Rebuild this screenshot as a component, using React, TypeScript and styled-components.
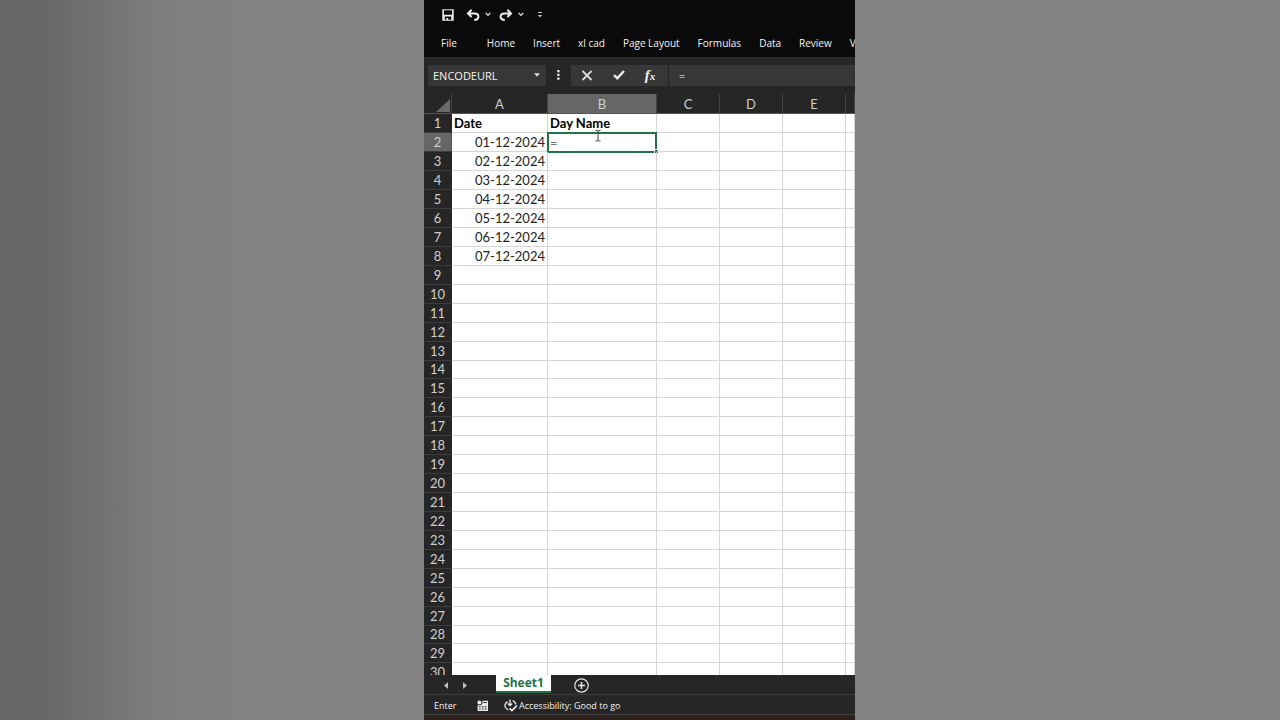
import React from "react";
import styled, { createGlobalStyle } from "styled-components";

const UI_FONT = '"Open Sans", "Noto Sans", sans-serif';
const CELL_FONT = 'Lato, "Open Sans", sans-serif';

const GlobalStyle = createGlobalStyle`
  *, *::before, *::after { box-sizing: border-box; }
  body { margin: 0; background: #828282; overflow: hidden; }
  button, input { font: inherit; color: inherit; border: 0; padding: 0; margin: 0; background: none; border-radius: 0; outline: none; }
  svg { display: block; }
`;

const Stage = styled.main`
  display: grid;
  grid-template-columns: 424fr 431fr 425fr;
  height: 100vh;
  background: linear-gradient(to right, #656565 0%, #696969 4%, #727272 8%, #7b7b7b 11%, #808080 15%, #828282 20%);
`;

const Workbook = styled.section`
  grid-column: 2;
  display: flex;
  flex-direction: column;
  min-width: 0;
  height: 100vh;
  overflow: hidden;
  background: #262626;
  color: #f4f4f4;
  font-family: ${UI_FONT};
  font-size: 10px;
  font-weight: 500;
`;

const QuickAccess = styled.header`
  display: flex;
  align-items: center;
  flex: none;
  height: 29px;
  padding-left: 18px;
  background: #0a0a0a;
`;

const IconButton = styled.button<{ $width: number; $gap?: number }>`
  display: flex;
  align-items: center;
  justify-content: center;
  flex: none;
  width: ${(p) => p.$width}px;
  height: 20px;
  margin-right: ${(p) => p.$gap ?? 0}px;
`;

const Ribbon = styled.nav`
  display: flex;
  flex: none;
  height: 28px;
  padding-left: 8px;
  background: #0a0a0a;
  overflow: hidden;
`;

const RibbonTab = styled.button<{ $wide?: boolean }>`
  flex: none;
  height: 28px;
  padding: 0 9px;
  margin-right: ${(p) => (p.$wide ? 12 : 0)}px;
  line-height: 28px;
  white-space: nowrap;
`;

const FormulaBar = styled.div`
  display: flex;
  align-items: center;
  flex: none;
  height: 37px;
  padding: 0 0 2px 4px;
  border-top: 1px solid #303030;
`;

const NameBox = styled.div`
  display: flex;
  align-items: center;
  flex: none;
  width: 118px;
  height: 21px;
  background: #373737;
`;

const NameInput = styled.input`
  flex: 1;
  min-width: 0;
  height: 21px;
  padding-left: 5px;
  font-size: 11px;
  font-weight: 400;
`;

const FormulaActions = styled.div`
  display: flex;
  flex: none;
  align-items: center;
  width: 98px;
  height: 21px;
  background: #373737;
  border-right: 1px solid #222;
`;

const FunctionGlyph = styled.span`
  font: italic 700 15px/20px "Liberation Serif", serif;

  small {
    font-size: 11px;
  }
`;

const FormulaInput = styled.input`
  flex: 1;
  min-width: 0;
  height: 21px;
  padding-left: 10px;
  background: #373737;
  font-size: 11px;
`;

const SheetArea = styled.div`
  flex: 1;
  min-height: 0;
  overflow: hidden;
  background: #fff;
`;

const SheetTable = styled.table`
  width: 100%;
  table-layout: fixed;
  border-collapse: separate;
  border-spacing: 0;
  font-family: ${CELL_FONT};
  font-size: 13px;
  line-height: 18px;
  color: #222;
`;

const Column = styled.col<{ $width?: number }>`
  width: ${(p) => (p.$width ? `${p.$width}px` : "auto")};
`;

const ColumnHeader = styled.th<{ $active?: boolean }>`
  height: 20px;
  padding: 1px 0 0;
  background: ${(p) => (p.$active ? "#666" : "#262626")};
  border-right: 1px solid #444;
  border-bottom: 1px solid ${(p) => (p.$active ? "#217346" : "#555")};
  color: #cfcfcf;
  font-weight: 400;
  line-height: 18px;
`;

const SheetRow = styled.tr`
  height: 19px;
  &:nth-child(14n) { height: 18px; }
  &:nth-child(14n) > * { line-height: 17px; }
`;

const RowHeader = styled.th<{ $active?: boolean }>`
  padding: 0;
  background: ${(p) => (p.$active ? "#666" : "#262626")};
  border-right: 1px solid ${(p) => (p.$active ? "#217346" : "#262626")};
  border-bottom: 1px solid #3c3c3c;
  color: #cfcfcf;
  font-weight: 400;
`;

const Cell = styled.td<{ $right?: boolean; $bold?: boolean }>`
  position: relative;
  padding: 0 2px;
  border-right: 1px solid #d6d6d6;
  border-bottom: 1px solid #d6d6d6;
  text-align: ${(p) => (p.$right ? "right" : "left")};
  font-weight: ${(p) => (p.$bold ? 700 : 400)};
  color: ${(p) => (p.$bold ? "#000" : "#222")};
  white-space: nowrap;
`;

const CellEditor = styled.input`
  position: absolute;
  inset: -1px;
  width: calc(100% + 2px);
  height: 21px;
  padding: 0 1px;
  border: 2px solid #217346;
  background: #fff;
  color: #777;
`;

const FillHandle = styled.span`
  position: absolute;
  right: -2px;
  bottom: -2px;
  width: 4px;
  height: 4px;
  background: #217346;
  border-left: 1px solid #fff;
  border-top: 1px solid #fff;
`;

const TextCursor = styled.svg`
  position: absolute;
  left: 46px;
  top: -3px;
`;

const SheetBar = styled.div`
  display: flex;
  flex: none;
  height: 20px;
  padding-left: 12px;
  border-bottom: 1px solid #3d3d3d;
`;

const SheetTab = styled.button`
  width: 55px;
  height: 18px;
  margin: 0 20px 0 21px;
  background: #fff;
  border-bottom: 2px solid #217346;
  color: #217346;
  font-size: 12px;
  font-weight: 700;
  line-height: 16px;
`;

const StatusBar = styled.footer`
  display: flex;
  align-items: center;
  flex: none;
  height: 19px;
  padding: 2px 0 0 10px;
  font-size: 9px;
`;

const StatusMode = styled.span`
  width: 42px;
`;

const StatusButton = styled.button`
  display: flex;
  align-items: center;
  gap: 1px;
  height: 17px;
  margin-left: 16px;
  white-space: nowrap;
`;

const BottomEdge = styled.div`
  flex: none;
  height: 6px;
  background: #2c221b;
  border-top: 1px solid #404040;
`;

const Chevron = () => (
  <svg width="6" height="5" viewBox="0 0 6 5" fill="none" stroke="#ddd" strokeWidth="1.3">
    <path d="M.7 1 3 3.4 5.3 1" />
  </svg>
);

const UndoIcon = ({ flip }: { flip?: boolean }) => (
  <svg width="14" height="12" viewBox="0 0 14 12" fill="none" stroke="#eee" strokeWidth="2">
    <g transform={flip ? "matrix(-1 0 0 1 14 0)" : undefined}>
      <path d="M5.6.8 2 4.4 5.6 8M2.2 4.4h6.2c2.6 0 4 1.3 4 3.1 0 2-1.5 3.4-4.2 3.5" />
    </g>
  </svg>
);

const SaveIcon = () => (
  <svg width="12" height="12" viewBox="0 0 12 12">
    <path fill="#eee" fillRule="evenodd" d="M.3.3h11.4v11.4H.3ZM1.9 1.3v4.4h8.2V1.3ZM2.8 7.6v3.1h1.6V9h1.8v1.7h3V7.6Z" />
  </svg>
);

const COLUMNS = ["A", "B", "C", "D", "E", ""];
const WIDTHS = [28, 96, 109, 63, 63, 63];
const TABS = ["File", "Home", "Insert", "xl cad", "Page Layout", "Formulas", "Data", "Review", "View"];
const DATES = ["01", "02", "03", "04", "05", "06", "07"].map((day) => `${day}-12-2024`);
const ROWS = Array.from({ length: 30 }, (_, i) => i + 1);

function DataCell({ row, column }: { row: number; column: string }) {
  if (row === 1) {
    return <Cell $bold>{column === "A" ? "Date" : column === "B" ? "Day Name" : ""}</Cell>;
  }
  if (column === "A") return <Cell $right>{DATES[row - 2]}</Cell>;
  if (column === "B" && row === 2) {
    return (
      <Cell>
        <CellEditor aria-label="Cell B2" defaultValue="=" />
        <FillHandle />
        <TextCursor width="8" height="12" viewBox="0 0 8 12" fill="none" stroke="#444">
          <path d="M1.5.5h1.6l.9.8.9-.8h1.6M4 1.3v8.9M1.5 11h1.6l.9-.8.9.8h1.6" />
        </TextCursor>
      </Cell>
    );
  }
  return <Cell />;
}

export default function App() {
  return (
    <Stage>
      <GlobalStyle />
      <Workbook>
        <QuickAccess>
          <IconButton $width={12} $gap={12} aria-label="Save"><SaveIcon /></IconButton>
          <IconButton $width={14} $gap={4} aria-label="Undo"><UndoIcon /></IconButton>
          <IconButton $width={8} $gap={7} aria-label="Undo history"><Chevron /></IconButton>
          <IconButton $width={14} $gap={4} aria-label="Redo"><UndoIcon flip /></IconButton>
          <IconButton $width={8} $gap={10} aria-label="Redo history"><Chevron /></IconButton>
          <IconButton $width={10} aria-label="Customize toolbar">
            <svg width="6" height="6" viewBox="0 0 6 6"><path fill="#ccc" d="M1 0h4v1H1ZM1 3h4L3 5.4Z" /></svg>
          </IconButton>
        </QuickAccess>
        <Ribbon>
          {TABS.map((tab) => <RibbonTab key={tab} $wide={tab === "File"}>{tab}</RibbonTab>)}
        </Ribbon>
        <FormulaBar>
          <NameBox>
            <NameInput aria-label="Name box" defaultValue="ENCODEURL" />
            <IconButton $width={18} aria-label="Open name list">
              <svg width="6" height="4" viewBox="0 0 6 4"><path fill="#ddd" d="M0 .3h6L3 3.7Z" /></svg>
            </IconButton>
          </NameBox>
          <IconButton $width={25} aria-label="Resize name box">
            <svg width="3" height="10" viewBox="0 0 3 10" fill="#eee"><path d="M.3 0h2.2v2.2H.3ZM.3 3.8h2.2V6H.3ZM.3 7.6h2.2v2.2H.3Z" /></svg>
          </IconButton>
          <FormulaActions>
            <IconButton $width={31} aria-label="Cancel">
              <svg width="12" height="11" viewBox="0 0 12 11" fill="none" stroke="#ddd" strokeWidth="1.8"><path d="m1.5 1 9 9M10.5 1l-9 9" /></svg>
            </IconButton>
            <IconButton $width={33} aria-label="Enter formula">
              <svg width="12" height="10" viewBox="0 0 12 10" fill="none" stroke="#eee" strokeWidth="2.4"><path d="m1 5.2 3.3 3L11 1" /></svg>
            </IconButton>
            <IconButton $width={30} aria-label="Insert function">
              <FunctionGlyph>f<small>x</small></FunctionGlyph>
            </IconButton>
          </FormulaActions>
          <FormulaInput aria-label="Formula" defaultValue="=" />
        </FormulaBar>
        <SheetArea>
          <SheetTable>
            <colgroup>
              {WIDTHS.map((width, i) => <Column key={i} $width={width} />)}
              <Column />
            </colgroup>
            <thead>
              <tr>
                <ColumnHeader aria-label="Select all">
                  <svg width="27" height="18" viewBox="0 0 27 18"><path fill="#6a6a6a" d="M26 4v13H12Z" /></svg>
                </ColumnHeader>
                {COLUMNS.map((name) => <ColumnHeader key={name} $active={name === "B"}>{name}</ColumnHeader>)}
              </tr>
            </thead>
            <tbody>
              {ROWS.map((row) => (
                <SheetRow key={row}>
                  <RowHeader scope="row" $active={row === 2}>{row}</RowHeader>
                  {COLUMNS.map((column) => <DataCell key={column} row={row} column={column} />)}
                </SheetRow>
              ))}
            </tbody>
          </SheetTable>
        </SheetArea>
        <SheetBar>
          <IconButton $width={19} aria-label="Previous sheet">
            <svg width="4" height="7" viewBox="0 0 4 7"><path fill="#bbb" d="M4 0v7L0 3.5Z" /></svg>
          </IconButton>
          <IconButton $width={20} aria-label="Next sheet">
            <svg width="4" height="7" viewBox="0 0 4 7"><path fill="#bbb" d="M0 0v7l4-3.5Z" /></svg>
          </IconButton>
          <SheetTab>Sheet1</SheetTab>
          <IconButton $width={20} aria-label="New sheet">
            <svg width="15" height="15" viewBox="0 0 15 15" fill="none" stroke="#e4e4e4"><circle cx="7.5" cy="7.5" r="6.7" strokeWidth="1.2" /><path strokeWidth="1.6" d="M7.5 4v7M4 7.5h7" /></svg>
          </IconButton>
        </SheetBar>
        <StatusBar>
          <StatusMode>Enter</StatusMode>
          <IconButton $width={12} aria-label="Record macro">
            <svg width="11" height="11" viewBox="0 0 11 11">
              <circle cx="2.4" cy="2.4" r="2" fill="#eee" />
              <path fill="#eee" fillRule="evenodd" d="M5.4.8H11V11H.6V5.2h3.2l1.6-1.4ZM6.2 2v1h3.6V2ZM2 6.3v.9h1.6v-.9Zm2.6 0v.9h2v-.9Zm3 0v.9h2v-.9ZM2 8.5v.9h1.6v-.9Zm2.6 0v.9h2v-.9Zm3 0v.9h2v-.9Z" />
            </svg>
          </IconButton>
          <StatusButton>
            <svg width="14" height="13" viewBox="0 0 14 13" fill="none" stroke="#eee" strokeWidth="1.3">
              <path d="M3.6 2.6C1.2 4 .5 6.3 1.4 8.3c.6 1.4 1.7 2.2 3 2.5M6 .6v5.8M3.8 4.5 6 6.7l2.2-2.2M8.6 1.7c1.9.7 3 2 3.2 3.8" />
              <path strokeWidth="1.7" d="m5.7 9.4 2.2 2.2 5-5" />
            </svg>
            Accessibility: Good to go
          </StatusButton>
        </StatusBar>
        <BottomEdge />
      </Workbook>
    </Stage>
  );
}
